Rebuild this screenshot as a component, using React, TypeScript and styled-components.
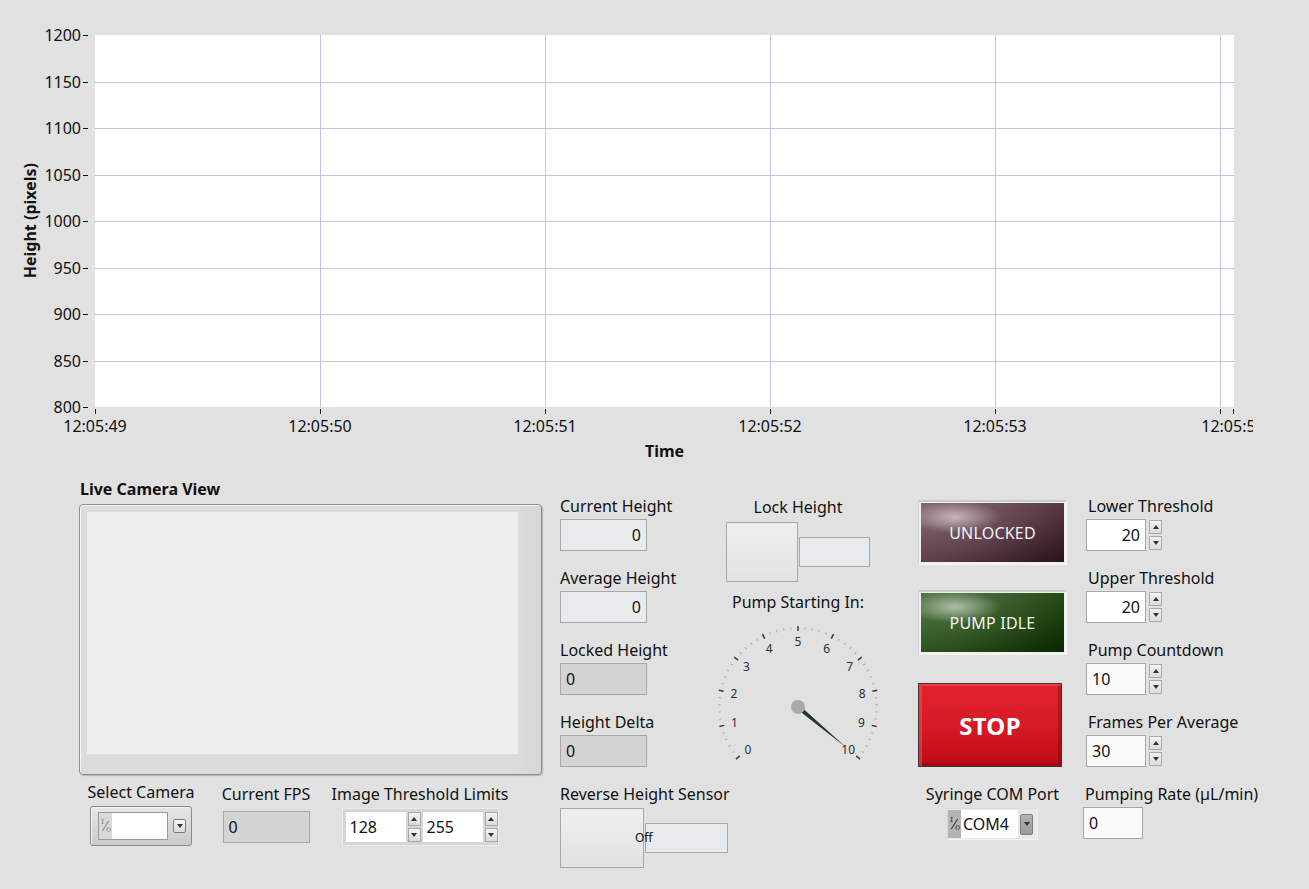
import React from 'react';
import styled, { createGlobalStyle } from 'styled-components';

const GlobalStyle = createGlobalStyle`
  html, body { margin: 0; padding: 0; background: #e1e1e1; }
  body { font-family: "Noto Sans", "DejaVu Sans", sans-serif; color: #111; }
  * { box-sizing: border-box; }
`;

const Page = styled.div`
  width: 1309px;
  height: 889px;
  overflow: hidden;
  background: #e1e1e1;
`;

/* ---------- Chart ---------- */
const ChartArea = styled.div`
  display: grid;
  grid-template-columns: 40px 1213px;
  grid-template-rows: 420px 30px;
  padding-top: 20px;
`;

const YTitle = styled.div`
  grid-row: 1;
  grid-column: 1;
  height: 402px;
  display: flex;
  align-items: center;
  justify-content: flex-end;
`;

const YTitleText = styled.span`
  writing-mode: vertical-rl;
  transform: rotate(180deg);
  font-weight: 700;
  font-size: 16px;
  line-height: 20px;
  white-space: nowrap;
`;

const PlotCell = styled.div`
  grid-row: 1;
  grid-column: 2;
  overflow: hidden;
`;

const XTitle = styled.div`
  grid-row: 2;
  grid-column: 2;
  width: 1139px;
  margin-left: 55px;
  padding-top: 1px;
  text-align: center;
  font-weight: 700;
  font-size: 16px;
  line-height: 20px;
`;

const yTicks = [1200, 1150, 1100, 1050, 1000, 950, 900, 850, 800];
const xTicks = ['12:05:49', '12:05:50', '12:05:51', '12:05:52', '12:05:53'];

const PlotSvg: React.FC = () => {
  const top = 15;
  const left = 55;
  const w = 1139;
  const h = 372;
  const step = h / 8;
  const labelProps = {
    fontFamily: 'Noto Sans, sans-serif',
    fontSize: 16,
    fill: '#111',
    dominantBaseline: 'central' as const,
  };
  return (
    <svg width={1213} height={420} style={{ display: 'block' }}>
      <rect x={left} y={top} width={w} height={h} fill="#ffffff" />
      {yTicks.map((v, i) => {
        const y = Math.round(top + i * step);
        return (
          <g key={v}>
            {i > 0 && i < 8 && (
              <line x1={left} x2={left + w} y1={y + 0.5} y2={y + 0.5} stroke="#c2c2ee" strokeWidth={1} />
            )}
            <line x1={43} x2={48} y1={y + 0.5} y2={y + 0.5} stroke="#111" strokeWidth={1} />
            <text x={41} y={y} textAnchor="end" {...labelProps}>
              {v}
            </text>
          </g>
        );
      })}
      {[1, 2, 3, 4, 5].map((k) => {
        const x = left + 225 * k;
        return <line key={k} x1={x + 0.5} x2={x + 0.5} y1={top} y2={top + h} stroke="#c2c2ee" strokeWidth={1} />;
      })}
      {[0, 1, 2, 3, 4, 5].map((k) => {
        const x = left + 225 * k;
        return <line key={k} x1={x + 0.5} x2={x + 0.5} y1={389} y2={394} stroke="#111" strokeWidth={1} />;
      })}
      <line x1={1193.5} x2={1193.5} y1={389} y2={394} stroke="#111" strokeWidth={1} />
      {xTicks.map((t, k) => (
        <text key={t} x={left + 225 * k} y={406} textAnchor="middle" {...labelProps}>
          {t}
        </text>
      ))}
      <text x={1193} y={406} textAnchor="middle" {...labelProps}>
        12:05:54
      </text>
    </svg>
  );
};

/* ---------- Common bits ---------- */
const Bottom = styled.div`
  display: flex;
  align-items: flex-start;
  padding-left: 79px;
`;

const Label = styled.div<{ $mt?: number }>`
  font-size: 16px;
  line-height: 20px;
  white-space: nowrap;
  margin-top: ${(p) => p.$mt ?? 0}px;
`;

const BoldLabel = styled.div`
  font-weight: 700;
  font-size: 16px;
  line-height: 20px;
  padding-left: 1px;
`;

const Field = styled.div<{ $ml?: number }>`
  display: flex;
  flex-direction: column;
  align-items: flex-start;
  margin-left: ${(p) => p.$ml ?? 0}px;
`;

const NumBox = styled.div<{ $w: number; $bg: string; $align: 'left' | 'right'; $mt?: number }>`
  width: ${(p) => p.$w}px;
  height: 32px;
  border: 1px solid #a8a8a8;
  background: ${(p) => p.$bg};
  font-size: 16px;
  line-height: 30px;
  text-align: ${(p) => p.$align};
  padding: 0 5px 0 5px;
  margin-top: ${(p) => p.$mt ?? 3}px;
`;

const InputRow = styled.div<{ $mt?: number }>`
  display: flex;
  align-items: center;
  gap: 3px;
  margin-top: ${(p) => p.$mt ?? 3}px;
`;

const Spinner = styled.div`
  display: flex;
  flex-direction: column;
  gap: 2px;
`;

const SpinBtn = styled.div<{ $dir: 'up' | 'down' }>`
  width: 13px;
  height: 14px;
  border: 1px solid #a9a9a9;
  background: linear-gradient(#f3f3f3, #dcdcdc);
  display: flex;
  flex-direction: column;
  align-items: center;
  justify-content: center;
  &::before {
    content: '';
    width: 0;
    height: 0;
    border-left: 3.5px solid transparent;
    border-right: 3.5px solid transparent;
    ${(p) => (p.$dir === 'up' ? 'border-bottom: 4px solid #333;' : 'display: none;')}
  }
  &::after {
    content: '';
    width: 0;
    height: 0;
    border-left: 3.5px solid transparent;
    border-right: 3.5px solid transparent;
    ${(p) => (p.$dir === 'down' ? 'border-top: 4px solid #333;' : 'display: none;')}
  }
`;

const SpinPair: React.FC = () => (
  <Spinner>
    <SpinBtn $dir="up" />
    <SpinBtn $dir="down" />
  </Spinner>
);

/* ---------- Camera column ---------- */
const CameraCol = styled.div`
  width: 463px;
  padding-top: 9px;
  display: flex;
  flex-direction: column;
`;

const CameraFrame = styled.div`
  margin-top: 5px;
  height: 271px;
  border: 1px solid #8e8e8e;
  border-radius: 4px;
  background: linear-gradient(90deg, #dcdcdc 0%, #dcdcdc 94%, #d6d6d6 100%);
  box-shadow: inset 1px 1px 0 #f5f5f5, 1px 1px 1px rgba(0, 0, 0, 0.2);
  padding: 7px 23px 20px 7px;
`;

const CameraImage = styled.div`
  width: 100%;
  height: 100%;
  background: #efefef;
`;

const CamRow = styled.div`
  display: flex;
  align-items: flex-start;
  margin-top: 7px;
`;

const CamItem = styled.div<{ $ml: number; $w: number }>`
  margin-left: ${(p) => p.$ml}px;
  width: ${(p) => p.$w}px;
  display: flex;
  flex-direction: column;
  align-items: center;
`;

const Ring = styled.div`
  margin-top: 4px;
  width: 102px;
  height: 40px;
  border: 1px solid #8a8a8a;
  border-radius: 3px;
  background: linear-gradient(#e6e6e6, #cbcbcb);
  box-shadow: inset 1px 1px 0 #f4f4f4;
  display: flex;
  align-items: center;
  padding: 0 5px 0 7px;
  gap: 5px;
`;

const RingField = styled.div<{ $w: number; $h: number }>`
  width: ${(p) => p.$w}px;
  height: ${(p) => p.$h}px;
  display: flex;
  align-items: stretch;
  background: #ffffff;
  border: 1px solid #9a9a9a;
`;

const IOGlyph = styled.div<{ $bg: string; $fg: string }>`
  position: relative;
  width: 13px;
  flex: none;
  background: ${(p) => p.$bg};
  font-size: 8px;
  line-height: 8px;
  color: ${(p) => p.$fg};
  font-family: "DejaVu Serif", serif;
  span {
    position: absolute;
  }
  span:first-child {
    left: 2px;
    top: calc(50% - 8px);
  }
  span:last-child {
    left: 7px;
    top: calc(50%);
  }
  &::after {
    content: '';
    position: absolute;
    left: 6px;
    top: calc(50% - 6px);
    width: 1px;
    height: 12px;
    background: ${(p) => p.$fg};
    transform: rotate(32deg);
  }
`;

const RingText = styled.div<{ $lh: number }>`
  flex: 1;
  background: #ffffff;
  font-size: 16px;
  line-height: ${(p) => p.$lh}px;
  padding-left: 2px;
`;

const DropBtn = styled.div<{ $bg: string; $h: number }>`
  width: 13px;
  height: ${(p) => p.$h}px;
  border: 1px solid #7c7c7c;
  border-radius: 2px;
  background: ${(p) => p.$bg};
  display: flex;
  align-items: center;
  justify-content: center;
  &::after {
    content: '';
    width: 0;
    height: 0;
    border-left: 3px solid transparent;
    border-right: 3px solid transparent;
    border-top: 4px solid #333;
  }
`;

const Cluster = styled.div`
  margin-top: 4px;
  width: 157px;
  height: 38px;
  background: #d6d6d6;
  border: 1px solid #ececec;
  border-right-color: #f2f2f2;
  display: flex;
  align-items: center;
  padding-left: 3px;
  gap: 2px;
`;

const ClusterInput = styled.div`
  width: 61px;
  height: 30px;
  background: #ffffff;
  font-size: 16px;
  line-height: 30px;
  padding-left: 4px;
`;

/* ---------- Middle group ---------- */
const MiddleGroup = styled.div`
  margin-left: 18px;
  padding-top: 26px;
  display: flex;
  flex-direction: column;
`;

const MiddleTop = styled.div`
  display: flex;
  align-items: flex-start;
`;

const NumCol = styled.div`
  width: 156px;
  display: flex;
  flex-direction: column;
  gap: 17px;
`;

const LockCol = styled.div`
  width: 164px;
  padding-top: 1px;
  display: flex;
  flex-direction: column;
  align-items: center;
`;

const Toggle = styled.div<{ $mt: number }>`
  position: relative;
  display: flex;
  align-items: center;
  margin-top: ${(p) => p.$mt}px;
`;

const ToggleSquare = styled.div<{ $w: number }>`
  width: ${(p) => p.$w}px;
  height: 60px;
  border: 1px solid #a8a8a8;
  background: linear-gradient(#eeefef, #e1e2e3);
`;

const ToggleBox = styled.div<{ $w: number }>`
  width: ${(p) => p.$w}px;
  height: 30px;
  margin-left: 1px;
  border: 1px solid #a8a8a8;
  background: #e8ebed;
`;

const OffText = styled.span`
  position: absolute;
  left: 75px;
  top: 22px;
  font-size: 12px;
  line-height: 16px;
`;

const GaugeWrap = styled.div`
  margin-top: 10px;
  width: 170px;
  height: 145px;
  overflow: visible;
`;

const Gauge: React.FC = () => {
  const cx = 85;
  const cy = 85;
  const pt = (v: number, r: number): [number, number] => {
    const a = ((220 - 26 * v) * Math.PI) / 180;
    return [cx + r * Math.cos(a), cy - r * Math.sin(a)];
  };
  const majors = Array.from({ length: 11 }, (_, i) => i);
  const minors: number[] = [];
  for (let i = 0; i < 10; i++) for (let j = 1; j < 5; j++) minors.push(i + j / 5);
  const tip = pt(10, 63);
  const a = ((220 - 260) * Math.PI) / 180;
  const nx = -Math.sin(a);
  const ny = -Math.cos(a);
  const bw = 2.2;
  const needle = `${cx + nx * bw},${cy + ny * bw} ${tip[0]},${tip[1]} ${cx - nx * bw},${cy - ny * bw}`;
  return (
    <svg width={170} height={160} style={{ display: 'block', overflow: 'visible' }}>
      {minors.map((v) => {
        const [x1, y1] = pt(v, 77.5);
        const [x2, y2] = pt(v, 80);
        return <line key={v} x1={x1} y1={y1} x2={x2} y2={y2} stroke="#b2b2b2" strokeWidth={1.2} />;
      })}
      {majors.map((v) => {
        const [x1, y1] = pt(v, 76);
        const [x2, y2] = pt(v, 81);
        const [tx, ty] = pt(v, 65.5);
        return (
          <g key={v}>
            <line x1={x1} y1={y1} x2={x2} y2={y2} stroke="#3a3a3a" strokeWidth={1.5} />
            <text
              x={tx}
              y={ty}
              textAnchor="middle"
              dominantBaseline="central"
              fontFamily="Noto Sans, sans-serif"
              fontSize={12}
              fill="#2b2f3a"
            >
              {v}
            </text>
          </g>
        );
      })}
      <polygon points={needle} fill="#26352b" />
      <circle cx={cx} cy={cy} r={7} fill="#a9a9a9" />
    </svg>
  );
};

const ReverseField = styled.div`
  margin-top: 17px;
  display: flex;
  flex-direction: column;
  align-items: flex-start;
`;

/* ---------- LED column ---------- */
const LedCol = styled.div`
  margin-left: 38px;
  width: 149px;
  padding-top: 30px;
  display: flex;
  flex-direction: column;
  align-items: center;
`;

const LedFrame = styled.div<{ $mt: number }>`
  width: 149px;
  height: 65px;
  margin-top: ${(p) => p.$mt}px;
  background: #f0f0f0;
  border-top: 2px solid #c9c9c9;
  border-left: 1px solid #d2d2d2;
  border-right: 1px solid #f7f7f7;
  border-bottom: 1px solid #f7f7f7;
  padding: 1px 2px 2px 2px;
`;

const LedFace = styled.div<{ $c1: string; $c2: string; $c3: string }>`
  width: 100%;
  height: 100%;
  display: flex;
  align-items: center;
  justify-content: center;
  color: #f2f2f2;
  font-size: 16px;
  letter-spacing: 0.2px;
  background:
    radial-gradient(ellipse 46px 16px at 24% 24%, rgba(255, 255, 255, 0.55), rgba(255, 255, 255, 0) 100%),
    radial-gradient(ellipse 120px 60px at 20% 20%, rgba(255, 255, 255, 0.12), rgba(255, 255, 255, 0) 100%),
    linear-gradient(155deg, ${(p) => p.$c1} 0%, ${(p) => p.$c2} 55%, ${(p) => p.$c3} 100%);
`;

const StopButton = styled.div`
  margin-top: 28px;
  align-self: flex-start;
  width: 144px;
  height: 84px;
  border: 1px solid #3a3a3a;
  background: linear-gradient(#e2232e 0%, #d51b26 50%, #bf0a15 100%);
  box-shadow:
    inset 3px 2px 0 rgba(255, 90, 100, 0.45),
    inset -3px -3px 0 rgba(110, 0, 8, 0.35);
  display: flex;
  align-items: center;
  justify-content: center;
  color: #ffffff;
  font-weight: 700;
  font-size: 24px;
  letter-spacing: 0.3px;
`;

const ComRing = styled.div`
  margin-top: 4px;
  width: 91px;
  height: 32px;
  background: #e9e9e9;
  border: 1px solid #f4f4f4;
  border-top-color: #dcdcdc;
  border-left-color: #dcdcdc;
  display: flex;
  align-items: center;
  gap: 2px;
  padding: 1px 4px 1px 0;
`;

const ComField = styled.div`
  flex: 1;
  height: 100%;
  display: flex;
  align-items: stretch;
`;

/* ---------- Right column ---------- */
const RightCol = styled.div`
  margin-left: 19px;
  padding-top: 26px;
  display: flex;
  flex-direction: column;
  gap: 17px;
`;

const RightLabel = styled(Label)`
  padding-left: 2px;
`;

const App: React.FC = () => (
  <Page>
    <GlobalStyle />
    <ChartArea>
      <YTitle>
        <YTitleText>Height (pixels)</YTitleText>
      </YTitle>
      <PlotCell>
        <PlotSvg />
      </PlotCell>
      <XTitle>Time</XTitle>
    </ChartArea>

    <Bottom>
      <CameraCol>
        <BoldLabel>Live Camera View</BoldLabel>
        <CameraFrame>
          <CameraImage />
        </CameraFrame>
        <CamRow>
          <CamItem $ml={8} $w={108}>
            <Label>Select Camera</Label>
            <Ring>
              <RingField $w={71} $h={28}>
                <IOGlyph $bg="#d9d9d9" $fg="#888">
                  <span>I</span>
                  <span>0</span>
                </IOGlyph>
                <RingText $lh={26} />
              </RingField>
              <DropBtn $bg="linear-gradient(#f4f4f4,#dcdcdc)" $h={14} />
            </Ring>
          </CamItem>
          <CamItem $ml={26} $w={90}>
            <Label $mt={2}>Current FPS</Label>
            <NumBox $w={87} $bg="#d4d4d4" $align="left" $mt={7}>
              0
            </NumBox>
          </CamItem>
          <CamItem $ml={21} $w={176}>
            <Label $mt={2}>Image Threshold Limits</Label>
            <Cluster>
              <ClusterInput>128</ClusterInput>
              <SpinPair />
              <ClusterInput>255</ClusterInput>
              <SpinPair />
            </Cluster>
          </CamItem>
        </CamRow>
      </CameraCol>

      <MiddleGroup>
        <MiddleTop>
          <NumCol>
            <Field>
              <Label>Current Height</Label>
              <NumBox $w={87} $bg="#e8ebed" $align="right">
                0
              </NumBox>
            </Field>
            <Field>
              <Label>Average Height</Label>
              <NumBox $w={87} $bg="#e8ebed" $align="right">
                0
              </NumBox>
            </Field>
            <Field>
              <Label>Locked Height</Label>
              <NumBox $w={87} $bg="#d4d4d4" $align="left">
                0
              </NumBox>
            </Field>
            <Field>
              <Label>Height Delta</Label>
              <NumBox $w={87} $bg="#d4d4d4" $align="left">
                0
              </NumBox>
            </Field>
          </NumCol>
          <LockCol>
            <Label>Lock Height</Label>
            <Toggle $mt={5}>
              <ToggleSquare $w={72} />
              <ToggleBox $w={71} />
            </Toggle>
            <Label $mt={10}>Pump Starting In:</Label>
            <GaugeWrap>
              <Gauge />
            </GaugeWrap>
          </LockCol>
        </MiddleTop>
        <ReverseField>
          <Label>Reverse Height Sensor</Label>
          <Toggle $mt={4}>
            <ToggleSquare $w={84} />
            <ToggleBox $w={83} />
            <OffText>Off</OffText>
          </Toggle>
        </ReverseField>
      </MiddleGroup>

      <LedCol>
        <LedFrame $mt={0}>
          <LedFace $c1="#775861" $c2="#553540" $c3="#2a1419">UNLOCKED</LedFace>
        </LedFrame>
        <LedFrame $mt={25}>
          <LedFace $c1="#416a33" $c2="#234913" $c3="#0b2702">PUMP IDLE</LedFace>
        </LedFrame>
        <StopButton>STOP</StopButton>
        <Label $mt={17}>Syringe COM Port</Label>
        <ComRing>
          <ComField>
            <IOGlyph $bg="#b4b4b4" $fg="#333">
              <span>I</span>
              <span>0</span>
            </IOGlyph>
            <RingText $lh={28}>COM4</RingText>
          </ComField>
          <DropBtn $bg="linear-gradient(#b2b2b2,#9c9c9c)" $h={21} />
        </ComRing>
      </LedCol>

      <RightCol>
        <Field>
          <RightLabel>Lower Threshold</RightLabel>
          <InputRow>
            <NumBox $w={60} $bg="#ffffff" $align="right" $mt={0}>
              20
            </NumBox>
            <SpinPair />
          </InputRow>
        </Field>
        <Field>
          <RightLabel>Upper Threshold</RightLabel>
          <InputRow>
            <NumBox $w={60} $bg="#ffffff" $align="right" $mt={0}>
              20
            </NumBox>
            <SpinPair />
          </InputRow>
        </Field>
        <Field>
          <RightLabel>Pump Countdown</RightLabel>
          <InputRow>
            <NumBox $w={60} $bg="#fafafa" $align="left" $mt={0}>
              10
            </NumBox>
            <SpinPair />
          </InputRow>
        </Field>
        <Field>
          <RightLabel>Frames Per Average</RightLabel>
          <InputRow>
            <NumBox $w={60} $bg="#fafafa" $align="left" $mt={0}>
              30
            </NumBox>
            <SpinPair />
          </InputRow>
        </Field>
        <Field $ml={-3}>
          <RightLabel>Pumping Rate (µL/min)</RightLabel>
          <NumBox $w={60} $bg="#fafafa" $align="left">
            0
          </NumBox>
        </Field>
      </RightCol>
    </Bottom>
  </Page>
);

export default App;
